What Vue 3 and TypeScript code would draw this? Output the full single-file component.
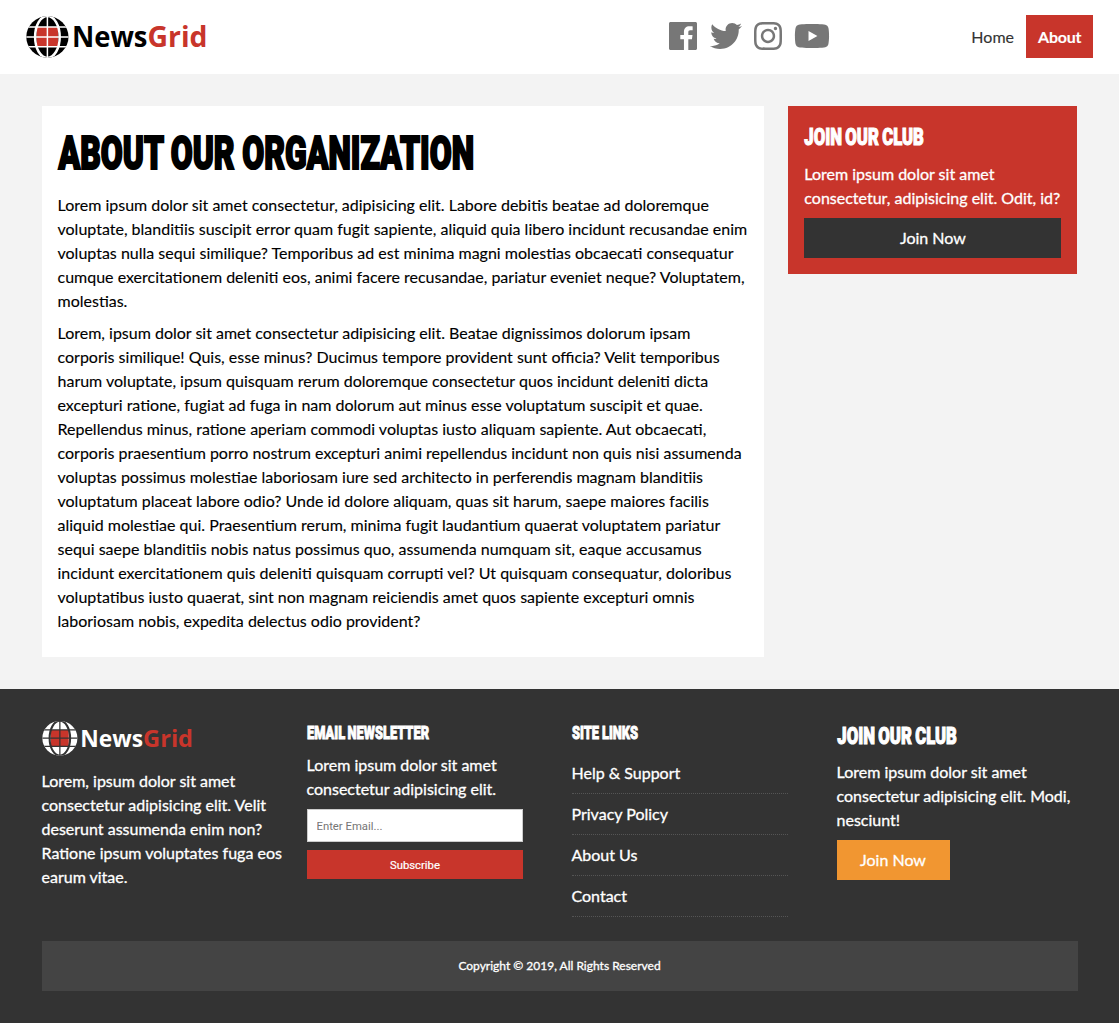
<script setup lang="ts">
interface Heading { text: string; x: number; width: number; length: number; height: number; size: number; base: number; stroke: number; gap: number }

const headings: Record<string, Heading> = {
  about: { text: 'ABOUT OUR ORGANIZATION', x: 0.5, width: 420, length: 415.5, height: 60, size: 46.4, base: 46.7, stroke: 2.2, gap: -0.4 },
  club: { text: 'JOIN OUR CLUB', x: 0.3, width: 125, length: 119.6, height: 30, size: 23.2, base: 22.9, stroke: 1.1, gap: -1.2 },
  email: { text: 'EMAIL NEWSLETTER', x: 0, width: 125, length: 122, height: 24, size: 18.4, base: 18, stroke: 0.9, gap: -1 },
  links: { text: 'SITE LINKS', x: 0, width: 125, length: 66, height: 24, size: 18.4, base: 18, stroke: 0.9, gap: -0.3 },
}

const socials = [
  { name: 'Facebook', width: 28, box: '0 0 448 512', d: 'M448 56.7v398.5c0 13.7-11.1 24.7-24.7 24.7H309.1V306.5h58.2l8.7-67.6h-67v-43.2c0-19.6 5.4-32.9 33.5-32.9h35.8v-60.5c-6.2-.8-27.4-2.7-52.2-2.7-51.6 0-87 31.5-87 89.4v49.9h-58.4v67.6h58.4V480H24.7C11.1 480 0 468.9 0 455.3V56.7C0 43.1 11.1 32 24.7 32h398.5c13.7 0 24.8 11.1 24.8 24.7z' },
  { name: 'Twitter', width: 32, box: '0 0 512 512', d: 'M459.37 151.716c.325 4.548.325 9.097.325 13.645 0 138.72-105.583 298.558-298.558 298.558-59.452 0-114.68-17.219-161.137-47.106 8.447.974 16.568 1.299 25.34 1.299 49.055 0 94.213-16.568 130.274-44.832-46.132-.975-84.792-31.188-98.112-72.772 6.498.974 12.995 1.624 19.818 1.624 9.421 0 18.843-1.3 27.614-3.573-48.081-9.747-84.143-51.98-84.143-102.985v-1.299c13.969 7.797 30.214 12.67 47.431 13.319-28.264-18.843-46.781-51.005-46.781-87.391 0-19.492 5.197-37.36 14.294-52.954 51.655 63.675 129.3 105.258 216.365 109.807-1.624-7.797-2.599-15.918-2.599-24.04 0-57.828 46.782-104.934 104.934-104.934 30.213 0 57.502 12.67 76.67 33.137 23.715-4.548 46.456-13.32 66.599-25.34-7.798 24.366-24.366 44.833-46.132 57.827 21.117-2.273 41.584-8.122 60.426-16.243-14.292 20.791-32.161 39.308-52.628 54.253z' },
  { name: 'Instagram', width: 28, box: '0 0 448 512', d: 'M224.1 141c-63.6 0-114.9 51.3-114.9 114.9s51.3 114.9 114.9 114.9S339 319.5 339 255.9 287.7 141 224.1 141zm0 189.6c-41.1 0-74.7-33.5-74.7-74.7s33.5-74.7 74.7-74.7 74.7 33.5 74.7 74.7-33.6 74.7-74.7 74.7zm146.4-194.3c0 14.9-12 26.8-26.8 26.8-14.9 0-26.8-12-26.8-26.8s12-26.8 26.8-26.8 26.8 12 26.8 26.8zm76.1 27.2c-1.7-35.9-9.9-67.7-36.2-93.9-26.2-26.2-58-34.4-93.9-36.2-37-2.1-147.9-2.1-184.9 0-35.8 1.7-67.6 9.9-93.9 36.1s-34.4 58-36.2 93.9c-2.1 37-2.1 147.9 0 184.9 1.7 35.9 9.9 67.7 36.2 93.9s58 34.4 93.9 36.2c37 2.1 147.9 2.1 184.9 0 35.9-1.7 67.7-9.9 93.9-36.2 26.2-26.2 34.4-58 36.2-93.9 2.1-37 2.1-147.8 0-184.8zM398.8 388c-7.8 19.6-22.9 34.7-42.6 42.6-29.5 11.7-99.5 9-132.1 9s-102.7 2.6-132.1-9c-19.6-7.8-34.7-22.9-42.6-42.6-11.7-29.5-9-99.5-9-132.1s-2.6-102.7 9-132.1c7.8-19.6 22.9-34.7 42.6-42.6 29.5-11.7 99.5-9 132.1-9s102.7-2.6 132.1 9c19.6 7.8 34.7 22.9 42.6 42.6 11.7 29.5 9 99.5 9 132.1s2.7 102.7-9 132.1z' },
  { name: 'YouTube', width: 36, box: '0 0 576 512', d: 'M549.655 124.083c-6.281-23.65-24.787-42.276-48.284-48.597C458.781 64 288 64 288 64S117.22 64 74.629 75.486c-23.497 6.322-42.003 24.947-48.284 48.597-11.412 42.867-11.412 132.305-11.412 132.305s0 89.438 11.412 132.305c6.281 23.65 24.787 41.5 48.284 47.821C117.22 448 288 448 288 448s170.78 0 213.371-11.486c23.497-6.321 42.003-24.171 48.284-47.821 11.412-42.867 11.412-132.305 11.412-132.305s0-89.438-11.412-132.305zm-317.51 213.508V175.185l142.739 81.205-142.739 81.201z' },
]

const paragraphs = [
  'Lorem ipsum dolor sit amet consectetur, adipisicing elit. Labore debitis beatae ad doloremque voluptate, blanditiis suscipit error quam fugit sapiente, aliquid quia libero incidunt recusandae enim voluptas nulla sequi similique? Temporibus ad est minima magni molestias obcaecati consequatur cumque exercitationem deleniti eos, animi facere recusandae, pariatur eveniet neque? Voluptatem, molestias.',
  'Lorem, ipsum dolor sit amet consectetur adipisicing elit. Beatae dignissimos dolorum ipsam corporis similique! Quis, esse minus? Ducimus tempore provident sunt officia? Velit temporibus harum voluptate, ipsum quisquam rerum doloremque consectetur quos incidunt deleniti dicta excepturi ratione, fugiat ad fuga in nam dolorum aut minus esse voluptatum suscipit et quae. Repellendus minus, ratione aperiam commodi voluptas iusto aliquam sapiente. Aut obcaecati, corporis praesentium porro nostrum excepturi animi repellendus incidunt non quis nisi assumenda voluptas possimus molestiae laboriosam iure sed architecto in perferendis magnam blanditiis voluptatum placeat labore odio? Unde id dolore aliquam, quas sit harum, saepe maiores facilis aliquid molestiae qui. Praesentium rerum, minima fugit laudantium quaerat voluptatem pariatur sequi saepe blanditiis nobis natus possimus quo, assumenda numquam sit, eaque accusamus incidunt exercitationem quis deleniti quisquam corrupti vel? Ut quisquam consequatur, doloribus voluptatibus iusto quaerat, sint non magnam reiciendis amet quos sapiente excepturi omnis laboriosam nobis, expedita delectus odio provident?',
]
const links = ['Help & Support', 'Privacy Policy', 'About Us', 'Contact']
const logos = [{ id: 'top', ink: '#000', gap: '#fff' }, { id: 'bottom', ink: '#fff', gap: '#333' }]
</script>

<template>
  <header class="navbar">
    <div class="bar">
      <svg class="logo" viewBox="0 0 182 44">
        <defs>
          <clipPath id="globe"><ellipse cx="21.4" cy="21.9" rx="21.1" ry="20.8" /></clipPath>
          <g id="grid-lines" fill="none" stroke-width="1.5">
            <path d="M21.4 0V43.2M0 21.9H43M0 12H43M0 31.7H43" />
            <ellipse cx="21.4" cy="21.9" rx="12.3" ry="21" stroke-width="2.5" />
          </g>
        </defs>
        <g clip-path="url(#globe)">
          <rect width="43" height="44" :fill="logos[0].ink" />
          <rect x="10.5" y="12" width="21.6" height="19.6" fill="#c8352b" />
          <use href="#grid-lines" :stroke="logos[0].gap" />
        </g>
        <text x="46" y="32" textLength="75.5" lengthAdjust="spacingAndGlyphs" :fill="logos[0].ink">News</text>
        <text x="121.5" y="32" textLength="60" lengthAdjust="spacingAndGlyphs" fill="#c8352b">Grid</text>
      </svg>
      <div class="social">
        <svg v-for="s in socials" :key="s.name" :viewBox="s.box" :width="s.width" height="32"><path :d="s.d" fill="#777" /></svg>
      </div>
      <nav><a>Home</a><a class="current">About</a></nav>
    </div>
  </header>

  <main class="container page">
    <article class="card">
      <h1><svg class="head" :width="headings.about.width" :height="headings.about.height">
        <text :x="headings.about.x" :y="headings.about.base" :textLength="headings.about.length" lengthAdjust="spacingAndGlyphs" :font-size="headings.about.size" :stroke-width="headings.about.stroke" :word-spacing="headings.about.gap">{{ headings.about.text }}</text>
      </svg></h1>
      <p v-for="(p, i) in paragraphs" :key="i">{{ p }}</p>
    </article>
    <aside class="club">
      <h2><svg class="head" :width="headings.club.width" :height="headings.club.height">
        <text :x="headings.club.x" :y="headings.club.base" :textLength="headings.club.length" lengthAdjust="spacingAndGlyphs" :font-size="headings.club.size" :stroke-width="headings.club.stroke" :word-spacing="headings.club.gap">{{ headings.club.text }}</text>
      </svg></h2>
      <p>Lorem ipsum dolor sit amet consectetur, adipisicing elit. Odit, id?</p>
      <a class="btn dark">Join Now</a>
    </aside>
  </main>

  <footer>
    <div class="container columns">
      <div>
        <svg class="logo small" viewBox="0 0 182 44">
          <g clip-path="url(#globe)">
            <rect width="43" height="44" :fill="logos[1].ink" />
            <rect x="10.5" y="12" width="21.6" height="19.6" fill="#c8352b" />
            <use href="#grid-lines" :stroke="logos[1].gap" />
          </g>
          <text x="46" y="32" textLength="75.5" lengthAdjust="spacingAndGlyphs" :fill="logos[1].ink">News</text>
          <text x="121.5" y="32" textLength="60" lengthAdjust="spacingAndGlyphs" fill="#c8352b">Grid</text>
        </svg>
        <p>Lorem, ipsum dolor sit amet consectetur adipisicing elit. Velit deserunt assumenda enim non? Ratione ipsum voluptates fuga eos earum vitae.</p>
      </div>
      <div>
        <h3><svg class="head" :width="headings.email.width" :height="headings.email.height">
          <text :x="headings.email.x" :y="headings.email.base" :textLength="headings.email.length" lengthAdjust="spacingAndGlyphs" :font-size="headings.email.size" :stroke-width="headings.email.stroke" :word-spacing="headings.email.gap">{{ headings.email.text }}</text>
        </svg></h3>
        <p>Lorem ipsum dolor sit amet consectetur adipisicing elit.</p>
        <form @submit.prevent>
          <input type="email" placeholder="Enter Email..." />
          <button type="submit">Subscribe</button>
        </form>
      </div>
      <div>
        <h3><svg class="head" :width="headings.links.width" :height="headings.links.height">
          <text :x="headings.links.x" :y="headings.links.base" :textLength="headings.links.length" lengthAdjust="spacingAndGlyphs" :font-size="headings.links.size" :stroke-width="headings.links.stroke" :word-spacing="headings.links.gap">{{ headings.links.text }}</text>
        </svg></h3>
        <ul><li v-for="l in links" :key="l">{{ l }}</li></ul>
      </div>
      <div>
        <h2><svg class="head" :width="headings.club.width" :height="headings.club.height">
          <text :x="headings.club.x" :y="headings.club.base" :textLength="headings.club.length" lengthAdjust="spacingAndGlyphs" :font-size="headings.club.size" :stroke-width="headings.club.stroke" :word-spacing="headings.club.gap">{{ headings.club.text }}</text>
        </svg></h2>
        <p>Lorem ipsum dolor sit amet consectetur adipisicing elit. Modi, nesciunt!</p>
        <a class="btn orange">Join Now</a>
      </div>
    </div>
    <div class="container"><div class="copyright">Copyright © 2019, All Rights Reserved</div></div>
  </footer>
</template>

<style>
body { margin: 0; background: #f3f3f3; }
#app { font: 16px/24px Lato, sans-serif; color: #000; -webkit-text-stroke: 0.12px currentColor; }
</style>

<style scoped>
* { box-sizing: border-box; margin: 0; padding: 0; }
.container { max-width: 1100px; margin: 0 auto; padding: 0 32px; }
.navbar { height: 74px; background: #fff; }
.bar { max-width: 1100px; height: 74px; margin: 0 auto; padding: 0 16px; display: flex; align-items: center; }
.logo { display: block; width: 182px; height: 44px; font: 700 28.6px "Open Sans", sans-serif; -webkit-text-stroke: 0; }
.bar .logo { flex: none; }
.logo.small { width: 151.5px; height: 36.6px; margin: -1px 0 12.4px; }
.social { display: flex; gap: 12px; margin: -2px auto 0 461.7px; }
.social svg { display: block; }
.social svg:first-child { margin-right: 0.5px; }
nav { display: flex; margin: -1px 0.5px 0 0; }
nav a { padding: 10px 12px 9px; height: 43px; color: #333; }
nav .current { width: 67px; background: #c8352b; color: #fff; font-weight: 700; letter-spacing: -0.2px; }
.page { display: grid; grid-template-columns: 5fr 2fr; gap: 24px; align-items: start; padding-top: 32px; padding-bottom: 32px; }
.card { background: #fff; padding: 16px; height: 551px; }
.head { display: block; overflow: visible; font-family: Roboto, sans-serif; font-weight: 900; fill: currentColor; }
.head text { stroke: currentColor; -webkit-text-stroke-width: initial; }
h1 { height: 71px; }
h2 { height: 40px; }
h3 { height: 32px; }
footer h2 { height: 39px; }
p { margin-bottom: 8px; }
.club { background: #c8352b; color: #fff; padding: 16px; }
.club, footer { -webkit-text-stroke: 0.3px currentColor; }
.btn { display: block; height: 40px; line-height: 40px; text-align: center; color: #fff; }
.dark { background: #333; }
.orange { background: #f19631; width: 113px; }
footer { height: 334px; background: #333; color: #fff; padding-top: 32px; }
.columns { display: grid; grid-template-columns: repeat(4, 1fr); gap: 24px; height: 220px; }
form { width: 90%; }
input, button { display: block; width: 100%; font: 400 11.3px Roboto, sans-serif; }
input { height: 33px; border: 1px solid #ccc; padding: 2px 9px 0; background: #fff; margin-bottom: 8px; -webkit-text-stroke: 0; }
input::placeholder { color: #757575; }
button { height: 29px; border: 0; padding-top: 2px; background: #c8352b; color: #fff; -webkit-text-stroke: 0.2px #fff; }
ul { list-style: none; width: 90%; }
li { height: 41px; padding-top: 8px; border-bottom: 1px dotted #555; }
.copyright { background: #444; height: 50px; line-height: 50px; text-align: center; font-size: 12px; }
</style>
